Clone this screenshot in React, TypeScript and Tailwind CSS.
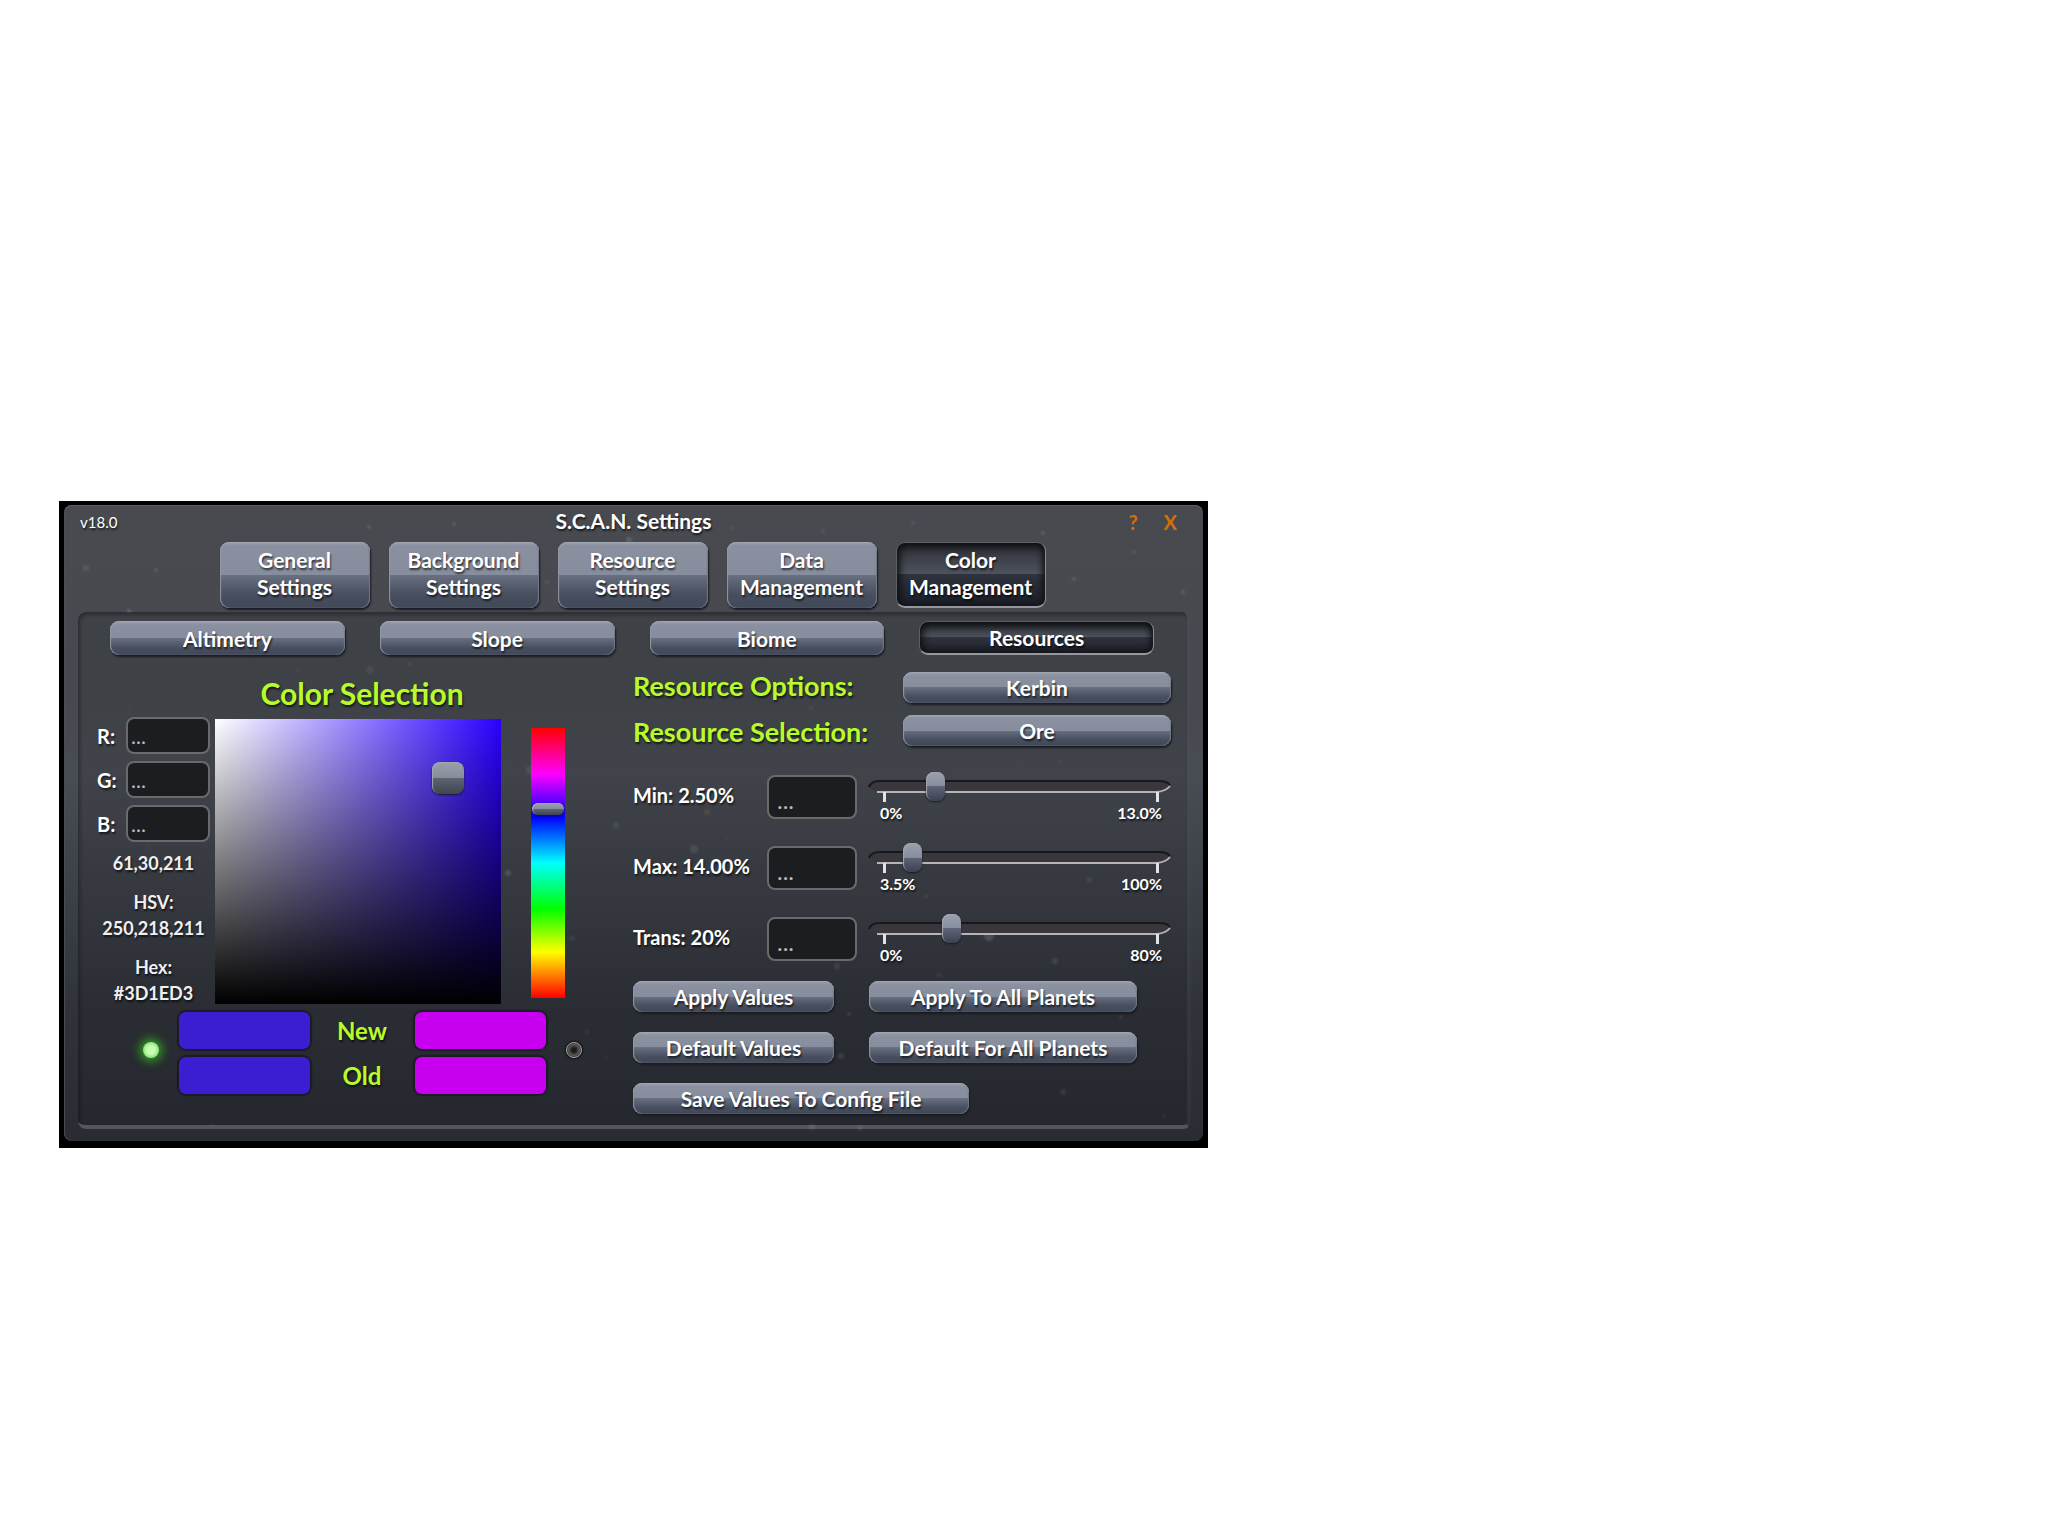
import React from "react";

const SHADOW = "[text-shadow:1px_2px_2px_rgba(0,0,0,0.65)]";

const RAISED =
  "rounded-[9px] bg-[linear-gradient(#9a9fad_0,#8a90a0_4px,#868d9d_50%,#687081_50%,#474e5e_80%,#414858)] shadow-[inset_1px_0_1px_#9298a6,inset_0_1px_1px_#a5a9b4,inset_-1px_0_1px_#6d7382,1px_2px_2px_#1a1c22]";

const PRESSED =
  "rounded-[9px] border border-[#5d5f65] border-b-2 border-b-[#96989d] border-r-[#8b8d92] bg-[linear-gradient(#2b2e34,#4f535d_50%,#2f333d_50%,#1b1e26)] shadow-[inset_2px_3px_8px_#0c0d10,inset_-2px_0_6px_#15171b]";

function GameButton({
  children,
  pressed = false,
  className = "",
}: {
  children: React.ReactNode;
  pressed?: boolean;
  className?: string;
}) {
  return (
    <button
      type="button"
      aria-pressed={pressed}
      className={`flex items-center justify-center text-center text-[21px] leading-[27px] font-bold text-white ${SHADOW} ${
        pressed ? PRESSED : RAISED
      } ${className}`}
    >
      {children}
    </button>
  );
}

const FIELD =
  "rounded-[8px] border-2 border-[#6b6a6b] bg-[#1c1d20] text-[#b9b9bb] outline-none placeholder:text-[#b9b9bb] placeholder:opacity-100";

function ChannelField({ name }: { name: string }) {
  return (
    <label className={`flex items-center justify-between text-xl leading-6 font-bold text-white ${SHADOW}`}>
      {name}:
      <input placeholder="..." className={`h-[37px] w-[84px] px-[3px] text-[21px] font-normal ${FIELD}`} />
    </label>
  );
}

const THUMB =
  "[&::-webkit-slider-thumb]:appearance-none [&::-webkit-slider-thumb]:border-0 [&::-webkit-slider-thumb]:bg-[linear-gradient(#9ba0ae,#868d9d_50%,#5d6475_50%,#3c4251)] [&::-webkit-slider-thumb]:shadow-[inset_1px_1px_1px_#a3a7b2,0_1px_2px_#17191e]";

function ValueSlider({
  id,
  label,
  low,
  high,
  position,
}: {
  id: string;
  label: string;
  low: string;
  high: string;
  position: number;
}) {
  return (
    <div className="flex items-start">
      <label htmlFor={id} className={`flex h-10 w-[134px] items-center text-xl font-bold whitespace-nowrap text-white ${SHADOW}`}>
        {label}
      </label>
      <input
        aria-label={`${label} value`}
        placeholder="..."
        className={`h-[44px] w-[90px] px-2 pt-1 text-2xl leading-6 font-normal ${FIELD}`}
      />
      <div className="ml-[11px] h-[43px] min-w-0 flex-1">
        <div className="grid grid-rows-[22px] items-center">
          <svg className="col-start-1 row-start-1 h-[14px] w-full" viewBox="0 0 303 14" preserveAspectRatio="none" aria-hidden="true">
            <path d="M0 7 Q3 1 12 1 H291 Q300 1 303 7 Q298 13 289 13 H14 Q5 13 0 7Z" fill="#39373b" />
            <path d="M1 8 Q3 2 12 2 H291 Q299 2 302 6" fill="none" stroke="#17181b" strokeWidth="2" />
            <path d="M9 13 H289 Q298 12 302 7" fill="none" stroke="#b5b5b8" strokeWidth="2" />
          </svg>
          <input
            id={id}
            type="range"
            min={0}
            max={1000}
            defaultValue={position}
            className={`col-start-1 row-start-1 h-[30px] w-full appearance-none bg-transparent [&::-webkit-slider-thumb]:h-[29px] [&::-webkit-slider-thumb]:w-[19px] [&::-webkit-slider-thumb]:rounded-[8px] ${THUMB}`}
          />
        </div>
        <div className="-mt-[5px] flex justify-between pr-3 pl-[15px]">
          <span className="h-[10px] w-[3px] bg-[#e2e3e5]" />
          <span className="h-[10px] w-[3px] bg-[#e2e3e5]" />
        </div>
        <div className={`flex justify-between pt-px pr-[9px] pl-3 text-base leading-5 font-bold text-white ${SHADOW}`}>
          <span>{low}</span>
          <span>{high}</span>
        </div>
      </div>
    </div>
  );
}

function Lamp({ on }: { on: boolean }) {
  return (
    <button
      type="button"
      aria-label={on ? "Edit first color" : "Edit second color"}
      aria-pressed={on}
      className={`mb-1.5 size-4 rounded-full ${
        on
          ? "bg-[radial-gradient(#c8ffb4_35%,#8eea78_65%,#d9f3d2_75%)] shadow-[0_0_9px_4px_#2f8f25]"
          : "border border-[#a3a39e] bg-[radial-gradient(#1c1b19_20%,#5c5a55_55%,#2b2b2c_75%)] shadow-[0_0_2px_1px_#0d0e10]"
      }`}
    />
  );
}

function Swatch({ className }: { className: string }) {
  return <div className={`h-[37px] rounded-[7px] shadow-[0_0_1px_2px_#1d1a28] ${className}`} />;
}

const STARS: [number, number, number, string][] = [
  [22, 63, 3, "#6b645f"], [92, 65, 2, "#686a6d"], [65, 106, 2, "#75777b"], [305, 22, 2, "#6d6f74"],
  [390, 19, 2, "#6a6760"], [413, 45, 3, "#75777b"], [483, 77, 2, "#66605c"], [565, 35, 3, "#6c717a"],
  [668, 23, 2, "#6d5c51"], [759, 26, 2, "#6b5c55"], [849, 18, 2, "#53677d"], [979, 28, 2, "#6b6d72"],
  [1010, 74, 2, "#7b7067"], [1070, 47, 2, "#75604f"], [1119, 87, 2, "#6f6a64"], [306, 165, 4, "#5b5d61"],
  [346, 159, 2, "#636466"], [234, 165, 2, "#595b5f"], [65, 204, 3, "#544b4b"], [747, 203, 2, "#5c6067"],
  [466, 265, 4, "#63676b"], [444, 368, 3, "#6b7077"], [552, 320, 3, "#5f656c"], [630, 344, 4, "#5f656d"],
  [643, 307, 3, "#74584b"], [663, 334, 2, "#5d4d4b"], [925, 431, 5, "#6b6c70"], [991, 456, 3, "#575e69"],
  [862, 391, 2, "#5a5d62"], [1025, 375, 3, "#54585f"], [996, 257, 2, "#565a60"], [773, 461, 3, "#555a63"],
  [777, 551, 3, "#525559"], [523, 527, 2, "#554e48"], [542, 552, 2, "#4e4641"], [999, 587, 3, "#4d4e50"],
  [748, 622, 3, "#55585c"], [796, 623, 2, "#606268"], [84, 342, 3, "#4f494a"], [508, 433, 3, "#4c4f55"],
  [1100, 611, 2, "#4c3a39"], [1057, 512, 2, "#5e463f"], [785, 509, 2, "#5b4f4b"], [875, 470, 2, "#54575d"],
  [148, 620, 2, "#4c3a39"],
];

function StarField() {
  return (
    <svg className="pointer-events-none absolute inset-0 size-full blur-[1px]" aria-hidden="true">
      {STARS.map(([x, y, r, fill]) => (
        <circle key={`${x}-${y}`} cx={x} cy={y} r={r} fill={fill} opacity="0.6" />
      ))}
    </svg>
  );
}

const TABS: [string, string][] = [
  ["General", "Settings"],
  ["Background", "Settings"],
  ["Resource", "Settings"],
  ["Data", "Management"],
  ["Color", "Management"],
];

const HEADING = "font-bold text-[#b8fb2a]";

function ColorPicker() {
  const value = `text-center text-lg leading-[26px] font-bold text-[#f0f0f0] ${SHADOW}`;
  return (
    <section className="pr-1.5">
      <h2 className={`pt-5 text-center text-[30px] leading-9 ${HEADING} ${SHADOW}`}>Color Selection</h2>
      <div className="mt-1.5 flex items-start">
        <div className="w-[113px]">
          <div className="flex flex-col gap-[7px]">
            <ChannelField name="R" />
            <ChannelField name="G" />
            <ChannelField name="B" />
          </div>
          <p className={`mt-2 ${value}`}>61,30,211</p>
          <p className={`mt-[13px] ${value}`}>
            HSV:
            <br />
            250,218,211
          </p>
          <p className={`mt-[13px] ${value}`}>
            Hex:
            <br />
            #3D1ED3
          </p>
        </div>
        <div className="relative mt-0.5 ml-[5px] h-[285px] w-[286px] bg-[linear-gradient(to_top,#000,transparent),linear-gradient(to_right,#fff,#2a00ff)]">
          <button
            type="button"
            aria-label="Saturation and value"
            className="absolute top-[15%] left-[76%] size-8 rounded-[8px] bg-[linear-gradient(#9a9fab,#868c99_50%,#5d6370_50%,#3f4551)] shadow-[inset_1px_1px_1px_#a3a7b2,0_1px_2px_#17191e]"
          />
        </div>
        <input
          type="range"
          aria-label="Hue"
          min={0}
          max={1000}
          defaultValue={292}
          className={`mt-[11px] ml-[30px] h-[270px] w-[34px] appearance-none bg-[linear-gradient(#f00_0%,#f0f_17%,#00f_33%,#0ff_50%,#0f0_67%,#ff0_83%,#f00_100%)] [writing-mode:vertical-lr] [&::-webkit-slider-thumb]:h-[12px] [&::-webkit-slider-thumb]:w-[32px] [&::-webkit-slider-thumb]:rounded-[8px] ${THUMB}`}
        />
      </div>
      <div className="mt-1.5 flex items-center justify-center gap-5">
        <Lamp on />
        <div className={`grid grid-cols-[131px_105px_131px] items-center gap-y-2 text-center text-2xl leading-[37px] ${HEADING} ${SHADOW}`}>
          <Swatch className="bg-[#3c1ed2]" />
          <span>New</span>
          <Swatch className="bg-[#c800f0]" />
          <Swatch className="bg-[#3c1ed2]" />
          <span>Old</span>
          <Swatch className="bg-[#c800f0]" />
        </div>
        <Lamp on={false} />
      </div>
    </section>
  );
}

function ResourceSettings() {
  return (
    <section className="pt-[17px]">
      <div className="grid grid-cols-[1fr_268px] items-center gap-y-3">
        <h3 className={`self-start text-[27px] leading-7 whitespace-nowrap ${HEADING} ${SHADOW}`}>Resource Options:</h3>
        <GameButton className="h-[31px]">Kerbin</GameButton>
        <h3 className={`self-end text-[27px] leading-7 whitespace-nowrap ${HEADING} ${SHADOW}`}>Resource Selection:</h3>
        <GameButton className="h-[31px]">Ore</GameButton>
      </div>
      <div className="mt-[29px] flex flex-col gap-[27px]">
        <ValueSlider id="min" label="Min: 2.50%" low="0%" high="13.0%" position={204} />
        <ValueSlider id="max" label="Max: 14.00%" low="3.5%" high="100%" position={123} />
        <ValueSlider id="trans" label="Trans: 20%" low="0%" high="80%" position={262} />
      </div>
      <div className="mt-5 grid grid-cols-[201px_268px] gap-x-[35px] gap-y-5">
        <GameButton className="h-[31px]">Apply Values</GameButton>
        <GameButton className="h-[31px]">Apply To All Planets</GameButton>
        <GameButton className="h-[31px]">Default Values</GameButton>
        <GameButton className="h-[31px]">Default For All Planets</GameButton>
        <GameButton className="col-span-2 h-[31px] w-[336px]">Save Values To Config File</GameButton>
      </div>
    </section>
  );
}

export default function App() {
  return (
    <main className="min-h-screen bg-white pt-[501px] pl-[59px] font-['Lato',sans-serif]">
      <div className="w-full max-w-[1149px] bg-black px-[5px] pt-1 pb-[7px]">
        <div className="relative rounded-[8px] bg-[linear-gradient(#484a50,#46494f_30%,#484c53_42%,#3c4047_60%,#2f3239_80%,#292c33)] pb-3 shadow-[inset_0_1px_1px_#5c5e63,inset_1px_0_1px_#4b4d53]">
          <StarField />
          <div className="relative">
            <header className={`grid h-[37px] grid-cols-3 items-center px-4 pb-0.5 text-white ${SHADOW}`}>
              <span className="text-[15px]">v18.0</span>
              <h1 className="pb-1 text-center text-[21px] leading-7 font-bold">S.C.A.N. Settings</h1>
              <div className="flex justify-end gap-[26px] pr-2.5 pb-px text-xl leading-6 font-bold text-[#d86f04]">
                <button type="button" aria-label="Help">?</button>
                <button type="button" aria-label="Close">X</button>
              </div>
            </header>
            <nav className="flex justify-center gap-[19px] pr-0.5">
              {TABS.map(([first, second], i) => (
                <GameButton key={first + second} pressed={i === 4} className="h-[66px] w-[150px] pb-1">
                  <span>
                    {first}
                    <br />
                    {second}
                  </span>
                </GameButton>
              ))}
            </nav>
            <div className="mt-1 mr-3 ml-3.5 rounded-[8px] border-r-4 border-b-4 border-r-[#8888881f] border-b-[#8a8c9277] bg-[#0000001a] pt-[9px] pb-[11px] shadow-[inset_2px_3px_4px_#00000055]">
              <nav className="grid grid-cols-4 gap-[35px] pr-[33px] pl-8">
                <GameButton className="h-[34px]">Altimetry</GameButton>
                <GameButton className="h-[34px]">Slope</GameButton>
                <GameButton className="h-[34px]">Biome</GameButton>
                <GameButton pressed className="h-[34px]">Resources</GameButton>
              </nav>
              <div className="grid grid-cols-[1fr_538px] pr-4 pl-[19px]">
                <ColorPicker />
                <ResourceSettings />
              </div>
            </div>
          </div>
        </div>
      </div>
    </main>
  );
}
